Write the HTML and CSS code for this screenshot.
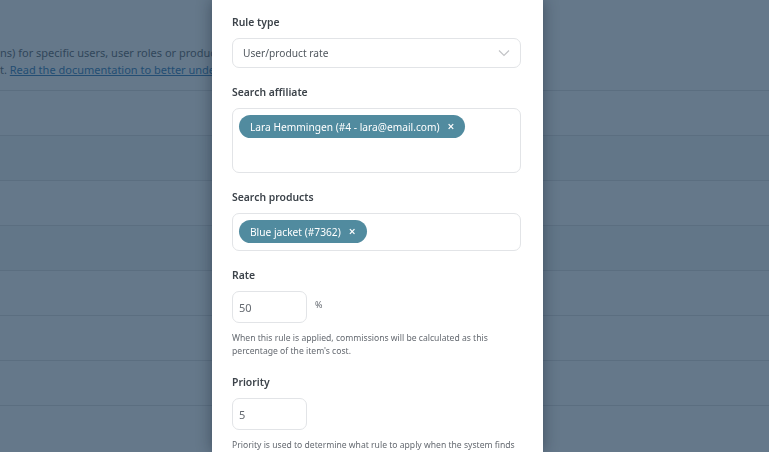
FILE: index.html
```html
<!DOCTYPE html>
<html>
<head>
    <title>Commission rules</title>
    <link rel="stylesheet" href="styles.css">
</head>
<body>
    <div class="page">
        <p class="intro">ns) for specific users, user roles or products to override the default commission rate.<br>
        t. <a href="#">Read the documentation to better understand how rules work.</a></p>
        <div class="rows">
            <div class="row"></div>
            <div class="row alt"></div>
            <div class="row"></div>
            <div class="row alt"></div>
            <div class="row"></div>
            <div class="row"></div>
            <div class="row"></div>
            <div class="row short"></div>
        </div>
    </div>

    <div class="overlay"></div>

    <div class="modal">
        <div class="field">
            <label class="label">Rule type</label>
            <div class="select">
                <span>User/product rate</span>
                <svg class="chevron" width="12" height="8" viewBox="0 0 12 8"><path d="M1 1.5 L6 6.5 L11 1.5" fill="none" stroke="#c3c4c7" stroke-width="1.2"/></svg>
            </div>
        </div>

        <div class="field">
            <label class="label">Search affiliate</label>
            <div class="tags tall">
                <span class="tag">Lara Hemmingen (#4 - lara@email.com) <b>&times;</b></span>
            </div>
        </div>

        <div class="field">
            <label class="label">Search products</label>
            <div class="tags">
                <span class="tag">Blue jacket (#7362) <b>&times;</b></span>
            </div>
        </div>

        <div class="field">
            <label class="label">Rate</label>
            <div class="inline">
                <div class="input">50</div>
                <span class="unit">%</span>
            </div>
            <p class="help">When this rule is applied, commissions will be calculated as this percentage of the item's cost.</p>
        </div>

        <div class="field">
            <label class="label">Priority</label>
            <div class="input">5</div>
            <p class="help">Priority is used to determine what rule to apply when the system finds multiple rules that match.</p>
        </div>
    </div>
</body>
</html>
```

FILE: styles.css
```css
html, body {
    margin: 0;
    height: 100%;
    overflow: hidden;
}
body {
    font-family: "Noto Sans", "Open Sans", sans-serif;
    background: #fff;
    color: #3c434a;
}
.page {
    padding-top: 44px;
}
.intro {
    margin: 0;
    width: 212px;
    overflow: hidden;
    font-size: 11px;
    line-height: 17px;
    white-space: nowrap;
    color: #50575e;
}
.intro a {
    color: #2271b1;
}
.rows {
    margin-top: 12px;
}
.row {
    height: 45px;
    border-top: 1px solid #dcdcde;
    box-sizing: border-box;
}
.row.alt {
    background: #f6f7f7;
}
.row.short {
    height: 25px;
}
.overlay {
    position: fixed;
    inset: 0;
    background: rgba(36, 62, 88, 0.7);
}
.modal {
    position: absolute;
    top: 0;
    left: 212px;
    width: 331px;
    height: 100%;
    box-sizing: border-box;
    padding: 14px 22px 0 20px;
    background: #fff;
    box-shadow: 0 0 14px rgba(20, 30, 45, 0.45);
}
.field {
    margin-bottom: 16px;
}
.label {
    display: block;
    font-size: 10.4px;
    font-weight: 600;
    line-height: 16px;
    color: #3c434a;
    margin-bottom: 8px;
}
.select {
    height: 30px;
    box-sizing: border-box;
    border: 1px solid #e2e4e7;
    border-radius: 7px;
    padding: 0 10px;
    display: flex;
    align-items: center;
    justify-content: space-between;
    font-size: 10.2px;
    color: #50575e;
}
.tags {
    min-height: 38px;
    box-sizing: border-box;
    border: 1px solid #e2e4e7;
    border-radius: 7px;
    padding: 6px 6px;
    display: flex;
    align-items: flex-start;
}
.tags.tall {
    height: 65px;
}
.tag {
    display: inline-flex;
    align-items: center;
    height: 23px;
    padding: 0 11px;
    border-radius: 12px;
    background: #518b9f;
    color: #fff;
    font-size: 10.2px;
    white-space: nowrap;
}
.tag b {
    font-weight: 600;
    font-size: 12px;
    margin-left: 8px;
}
.inline {
    display: flex;
    align-items: center;
}
.input {
    width: 75px;
    height: 32px;
    box-sizing: border-box;
    border: 1px solid #e2e4e7;
    border-radius: 7px;
    padding: 0 6px;
    display: flex;
    align-items: center;
    font-size: 11px;
    color: #646970;
}
.unit {
    font-size: 9px;
    color: #646970;
    margin-left: 8px;
    margin-top: -6px;
}
.help {
    margin: 9px 0 0;
    font-size: 8.6px;
    line-height: 13px;
    color: #646970;
}
```
